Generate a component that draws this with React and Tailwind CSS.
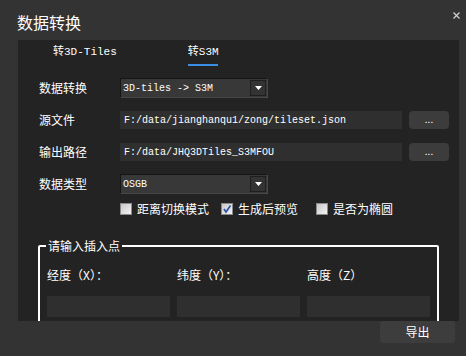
const sans = { fontFamily: '"Noto Sans CJK SC", "Noto Sans", sans-serif' };

const Checkbox = ({ checked, label }) => (
  <div className="flex items-center gap-[5px]">
    <div className="w-[12px] h-[12px] border border-[#8a8a8a] bg-gradient-to-br from-[#c8c8c8] to-[#f4f4f4] flex items-center justify-center">
      {checked && (
        <svg width="10" height="10" viewBox="0 0 10 10">
          <path d="M2 5 L4 8 L8.5 1.5" stroke="#2a4fa8" strokeWidth="1.6" fill="none" />
        </svg>
      )}
    </div>
    <span className="text-[12px] text-white leading-none">{label}</span>
  </div>
);

const Select = ({ value }) => (
  <div className="w-[148px] h-[20px] flex border border-t-[#151515] border-l-[#151515] border-b-[#474747] border-r-[#474747] bg-[#383838]">
    <div className="flex-1 flex items-center pl-[2px] text-[10px] text-white font-['Liberation_Mono',monospace]">{value}</div>
    <div className="w-[16px] m-[1px] bg-[#333] border border-[#1e1e1e] flex items-center justify-center">
      <svg width="7" height="4" viewBox="0 0 7 4">
        <path d="M0 0 H7 L3.5 4 Z" fill="#fff" />
      </svg>
    </div>
  </div>
);

const PathInput = ({ value }) => (
  <div className="flex items-center gap-[7px]">
    <div className="w-[282px] h-[18px] bg-[#2f2f2f] flex items-center pl-[4px] text-[10px] text-white font-['Liberation_Mono',monospace]">
      {value}
    </div>
    <button className="w-[40px] h-[18px] bg-[#3c3c3c] rounded-[4px] text-[10px] text-white leading-none pb-[2px]">...</button>
  </div>
);

const Row = ({ label, children }) => (
  <div className="h-[32px] shrink-0 flex items-center">
    <div className="w-[102px] pl-[21px] text-[12px] text-white">{label}</div>
    {children}
  </div>
);

export default function App() {
  return (
    <div className="w-[470px] h-[360px] bg-white" style={sans}>
      <div className="w-[466px] h-[356px] bg-[#333] flex flex-col">
        <div className="h-[40px] shrink-0 flex items-start justify-between pl-[17px] pr-[8px]">
          <span className="mt-[12px] text-[16px] text-white leading-[20px]">数据转换</span>
          <svg className="mt-[12px] mr-[-2px]" width="7" height="7" viewBox="0 0 7 7">
            <path d="M0.5 0.5 L6.5 6.5 M6.5 0.5 L0.5 6.5" stroke="#d0d0d0" strokeWidth="1.2" />
          </svg>
        </div>

        <div className="ml-[18px] w-[441px] h-[281px] shrink-0 bg-[#232323] overflow-hidden">
          <div className="h-[32px] flex items-start pl-[35px]">
            <div className="mt-[3px] text-[11px] text-white font-['Liberation_Mono',monospace] leading-[14px]">
              <span style={sans}>转</span>3D-Tiles
            </div>
            <div className="ml-[71px] mt-[3px] flex flex-col items-center">
              <div className="text-[11px] text-white font-['Liberation_Mono',monospace] leading-[14px]">
                <span style={sans}>转</span>S3M
              </div>
              <div className="mt-[5px] w-[30px] h-[2px] bg-[#3a8ee6]" />
            </div>
          </div>

          <Row label="数据转换">
            <Select value="3D-tiles -> S3M" />
          </Row>
          <Row label="源文件">
            <PathInput value="F:/data/jianghanqu1/zong/tileset.json" />
          </Row>
          <Row label="输出路径">
            <PathInput value="F:/data/JHQ3DTiles_S3MFOU" />
          </Row>
          <Row label="数据类型">
            <Select value="OSGB" />
          </Row>

          <div className="h-[18px] flex items-center pl-[102px]">
            <Checkbox label="距离切换模式" />
            <div className="ml-[12px]">
              <Checkbox checked label="生成后预览" />
            </div>
            <div className="ml-[18px]">
              <Checkbox label="是否为椭圆" />
            </div>
          </div>

          <div className="mt-[27px] ml-[20px] w-[401px] h-[140px] border-2 border-white rounded-[2px] relative">
            <span className="absolute -top-[9px] left-[6px] px-[2px] bg-[#232323] text-[12px] text-white leading-[16px]">请输入插入点</span>
            <div className="grid grid-cols-3 gap-x-[7px] px-[7px] pt-[20px]">
              <div className="text-[12px] text-white leading-[16px]">经度（X）：</div>
              <div className="text-[12px] text-white leading-[16px]">纬度（Y）：</div>
              <div className="text-[12px] text-white leading-[16px]">高度（Z）</div>
              <div className="mt-[13px] h-[21px] bg-[#2f2f2f]" />
              <div className="mt-[13px] h-[21px] bg-[#2f2f2f]" />
              <div className="mt-[13px] h-[21px] bg-[#2f2f2f]" />
            </div>
          </div>
        </div>

        <div className="flex justify-end pr-[11px]">
          <button className="w-[75px] h-[22px] bg-[#3d3d3d] rounded-[3px] text-[12px] text-white">导出</button>
        </div>
      </div>
    </div>
  );
}
